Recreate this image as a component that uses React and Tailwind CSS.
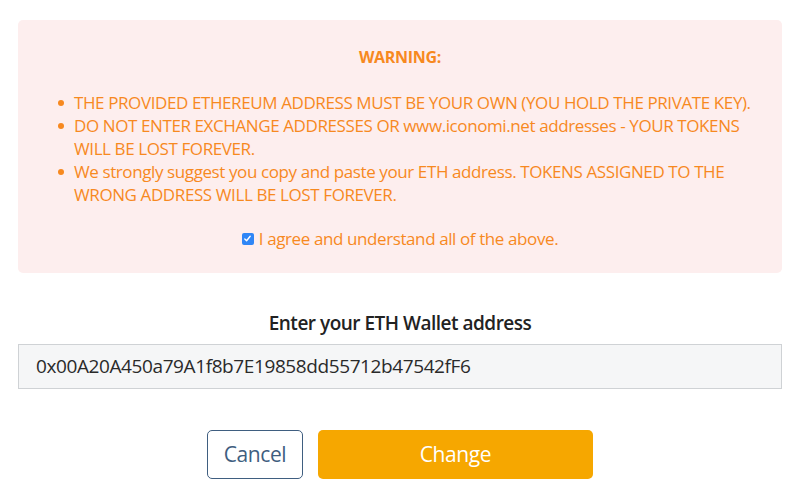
import React from 'react';

const Bullet = ({ children }) => (
    <li className="flex">
        <span className="flex h-[23px] w-[16px] shrink-0 items-center">
            <span className="h-[6px] w-[6px] rounded-full bg-[#f7891f]"></span>
        </span>
        <span className="whitespace-nowrap">{children}</span>
    </li>
);

const App = () => {
    return (
        <div className="w-[800px] h-[499px] bg-white px-[18px] pt-[20px] font-['Open_Sans',sans-serif]">
            {/* Warning box */}
            <div className="h-[253px] rounded-[5px] bg-[#fdeeee] pt-[26px] text-[#f7891f]">
                <p className="text-center text-[16px] font-bold leading-[23px] tracking-[-0.3px]">WARNING:</p>
                <ul className="mt-[22px] pl-[40px] pr-[20px] text-[17px] leading-[23px] tracking-[-0.4px]">
                    <Bullet>THE PROVIDED ETHEREUM ADDRESS MUST BE YOUR OWN (YOU HOLD THE PRIVATE KEY).</Bullet>
                    <Bullet>DO NOT ENTER EXCHANGE ADDRESSES OR www.iconomi.net addresses - YOUR TOKENS<br />WILL BE LOST FOREVER.</Bullet>
                    <Bullet>We strongly suggest you copy and paste your ETH address. TOKENS ASSIGNED TO THE<br />WRONG ADDRESS WILL BE LOST FOREVER.</Bullet>
                </ul>
                <label className="mt-[21px] flex items-center justify-center gap-[5px] text-[17px] leading-[23px] tracking-[-0.4px]">
                    <span className="flex h-[12px] w-[12px] items-center justify-center rounded-[2px] bg-[#2f86f6]">
                        <svg width="9" height="9" viewBox="0 0 10 10" fill="none" stroke="white" strokeWidth="1.5" strokeLinecap="round" strokeLinejoin="round">
                            <path d="M2 5.5 L4 7.5 L8 2.5" />
                        </svg>
                    </span>
                    I agree and understand all of the above.
                </label>
            </div>

            {/* Address field */}
            <p className="mt-[37px] text-center text-[19px] font-semibold leading-[26px] tracking-[-0.5px] text-[#222]">Enter your ETH Wallet address</p>
            <div className="mt-[8px] flex h-[45px] items-center border border-[#cfd2d5] bg-[#f5f6f7] px-[17px] text-[19px] tracking-[-0.4px] text-[#2a2a2a]">
                0x00A20A450a79A1f8b7E19858dd55712b47542fF6
            </div>

            {/* Buttons */}
            <div className="mt-[41px] flex justify-center gap-[15px]">
                <button className="h-[49px] w-[96px] rounded-[5px] border border-[#3f5e80] bg-white text-[21px] tracking-[-0.4px] text-[#3f5e80]">Cancel</button>
                <button className="h-[49px] w-[275px] rounded-[5px] bg-[#f6a700] text-[21px] tracking-[-0.4px] text-white">Change</button>
            </div>
        </div>
    );
};

export default App;
